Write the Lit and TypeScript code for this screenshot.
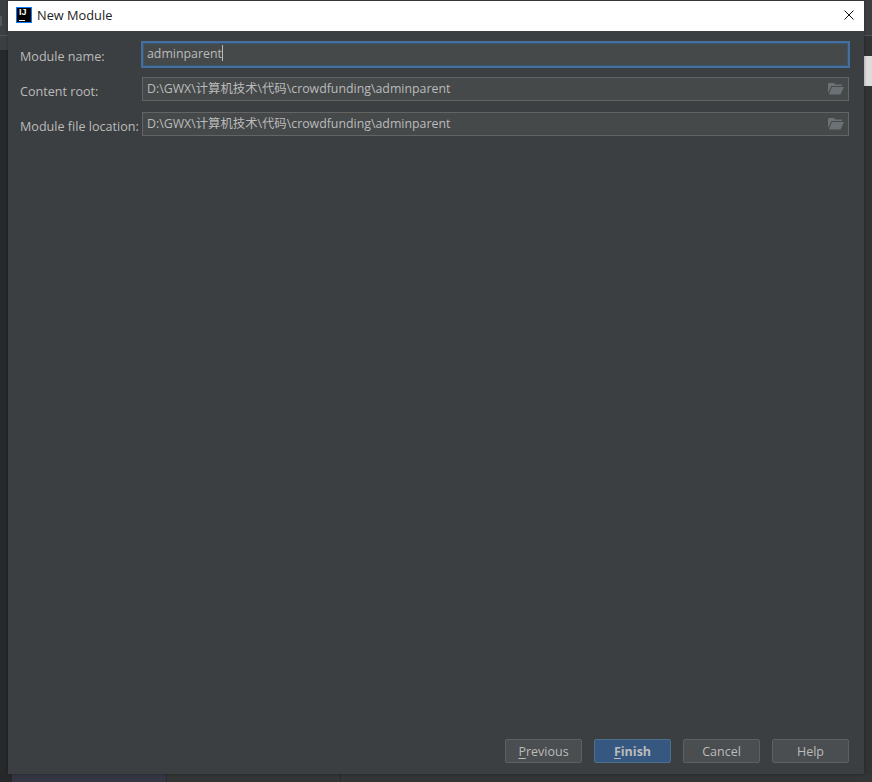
import { LitElement, html, css } from "lit";
import { customElement } from "lit/decorators.js";

const folder = html`<svg class="folder" width="16" height="12" viewBox="0 0 16 12"><path d="M0 1 L1 0 H6 L7.5 1.5 H14 V3 H3.5 L0 10 Z" fill="#6b7174"/><path d="M4 4 H16 L12.5 11.5 H.8 Z" fill="#6b7174"/></svg>`;

@customElement("app-root")
export class AppRoot extends LitElement {
  static styles = css`
    :host { display: block; width: 872px; height: 782px; overflow: hidden; position: relative; background: #26282a; font-family: "Open Sans", "Noto Sans", "Noto Sans CJK SC", sans-serif; }
    .desk { position: absolute; inset: 0; }
    .topband { position: absolute; left: 0; right: 0; top: 0; height: 50px; background: #3c3f41; }
    .topline { position: absolute; left: 0; right: 0; top: 35px; height: 1px; background: #515456; }
    .tick { position: absolute; left: 0; top: 16px; width: 2px; height: 10px; background: #55585a; }
    .rightcol { position: absolute; right: 0; top: 36px; bottom: 0; width: 8px; background: #313335; }
    .bottom { position: absolute; left: 12px; right: 0; bottom: 0; height: 8px; background: #333537; }
    .under { position: absolute; left: 12px; bottom: 0; width: 154px; height: 8px; background: #343643; }
    .sep1 { position: absolute; left: 166px; bottom: 0; width: 1px; height: 8px; background: #2b2b2b; }
    .sep2 { position: absolute; left: 340px; bottom: 0; width: 1px; height: 8px; background: #2b2b2b; }
    .scroll { position: absolute; right: 0; top: 56px; width: 8px; height: 30px; background: #dcdcdc; }
    .win { position: absolute; left: 8px; top: 1px; width: 856px; height: 773px; display: flex; flex-direction: column; background: #3c3f41; box-shadow: 0 0 3px rgba(0,0,0,.35); }
    .title { height: 30px; box-sizing: border-box; background: #fff; display: flex; align-items: center; padding: 0 8px 2px; gap: 5px; color: #222; font-size: 12.8px; flex: none; }
    .logo { width: 16px; height: 16px; box-sizing: border-box; background: #000; border: 1px solid #087cfa; color: #fff; font: bold 9px/9px "Liberation Sans", sans-serif; padding: 0 0 0 2px; position: relative; flex: none; }
    .logo i { position: absolute; left: 2px; bottom: 1px; width: 6px; height: 1px; background: #fff; }
    .close { margin-left: auto; margin-right: 2px; width: 10px; height: 10px; display: block; }
    .body { flex: 1; display: flex; flex-direction: column; padding: 10px 15px 0 12px; min-height: 0; }
    .form { display: grid; grid-template-columns: 122px 1fr; row-gap: 11px; align-items: center; }
    label { color: #bbbbbb; font-size: 12.6px; white-space: nowrap; padding-top: 4px; }
    label.first { padding-top: 6px; }
    .field { height: 24px; box-sizing: border-box; border: 1px solid #646464; background: #45494a; color: #bbbbbb; font-size: 12.35px; display: flex; align-items: center; padding: 0 4px; justify-content: space-between; }
    .field > span { padding-bottom: 3px; }
    .focus { border: 2px solid #456f9c; box-shadow: inset 0 0 0 1px #3b5673; height: 27px; margin: 0 -1px -2px -1px; padding: 0 4px; }
    .focus > span { padding-bottom: 2px; }
    .caret { display: inline-block; width: 1px; height: 16px; background: #bbb; vertical-align: -3px; }
    .folder { flex: none; }
    .foot { margin-top: auto; display: flex; justify-content: flex-end; gap: 12px; padding: 0 0 11px 0; }
    .btn { width: 77px; height: 24px; box-sizing: border-box; border: 1px solid #5e6060; border-radius: 2px; background: #4a4e50; color: #bbbbbb; font-size: 12.5px; display: flex; align-items: center; justify-content: center; }
    .primary { background: #365880; border-color: #4c708c; font-weight: 700; }
    u { text-underline-offset: 2px; }
  `;
  render() {
    return html`
      <div class="desk">
        <div class="topband"></div><div class="topline"></div><div class="tick"></div>
        <div class="rightcol"></div><div class="bottom"></div>
        <div class="under"></div><div class="sep1"></div><div class="sep2"></div><div class="scroll"></div>
      </div>
      <div class="win">
        <div class="title">
          <div class="logo">IJ<i></i></div><span>New Module</span>
          <svg class="close" viewBox="0 0 10 10"><path d="M.5 .5 L9.5 9.5 M9.5 .5 L.5 9.5" stroke="#111" stroke-width="1" fill="none"/></svg>
        </div>
        <div class="body">
          <div class="form">
            <label class="first">Module name:</label>
            <div class="field focus"><span>adminparent<span class="caret"></span></span></div>
            <label>Content root:</label>
            <div class="field"><span>D:\\GWX\\计算机技术\\代码\\crowdfunding\\adminparent</span>${folder}</div>
            <label>Module file location:</label>
            <div class="field"><span>D:\\GWX\\计算机技术\\代码\\crowdfunding\\adminparent</span>${folder}</div>
          </div>
          <div class="foot">
            <div class="btn"><span><u>P</u>revious</span></div>
            <div class="btn primary"><span><u>F</u>inish</span></div>
            <div class="btn">Cancel</div>
            <div class="btn">Help</div>
          </div>
        </div>
      </div>
    `;
  }
}
